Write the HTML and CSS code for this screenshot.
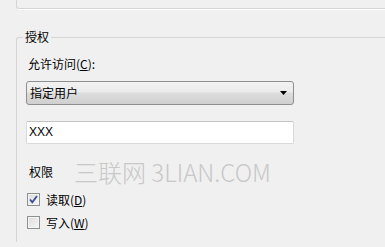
FILE: index.html
```html
<!DOCTYPE html>
<html>
<head>
<meta charset="utf-8">
<link rel="stylesheet" href="styles.css">
</head>
<body>
<div class="prev-group"></div>
<fieldset class="group">
  <legend class="group-title">授权</legend>
  <div class="field-label">允许访问(<u>C</u>):</div>
  <div class="select">
    <span class="select-text">指定用户</span>
    <svg class="select-arrow" width="7" height="4" viewBox="0 0 7 4"><path d="M0 0H7L3.5 4Z" fill="#000"/></svg>
  </div>
  <div class="input">XXX</div>
  <div class="perm-head">
    <span class="section-label">权限</span>
    <span class="watermark">三联网 3LIAN.COM</span>
  </div>
  <div class="check-row first">
    <span class="checkbox">
      <svg width="9" height="9" viewBox="0 0 9 9"><path d="M1 4.5L3.3 7.2L8 1" fill="none" stroke="#3b4f91" stroke-width="1.8"/></svg>
    </span>
    <span class="check-label">读取(<u>D</u>)</span>
  </div>
  <div class="check-row">
    <span class="checkbox"></span>
    <span class="check-label">写入(<u>W</u>)</span>
  </div>
</fieldset>
</body>
</html>
```
FILE: styles.css
```css
html, body {
  margin: 0;
  padding: 0;
  background: #f0f0f0;
  overflow: hidden;
  width: 385px;
  height: 247px;
}
body {
  font-family: "Noto Sans CJK SC", "Noto Sans", sans-serif;
  font-size: 12px;
  color: #000;
}
.prev-group {
  margin-left: 16px;
  height: 8px;
  border-left: 1px solid #d5d5d5;
  border-bottom: 1px solid #d5d5d5;
  border-bottom-left-radius: 3px;
  box-shadow: 1px 1px 0 #fff;
}
.group {
  margin: 20px 0 0 16px;
  padding: 0 0 0 9px;
  height: 213px;
  border: 1px solid #d5d5d5;
  border-right: none;
  border-bottom: none;
  border-top-left-radius: 3px;
  box-sizing: border-box;
  min-width: 0;
}
.group-title {
  margin-left: -3px;
  padding: 0 2px;
  line-height: 16px;
}
.field-label {
  margin-top: 11px;
  padding-left: 2px;
  line-height: 16px;
}
.select {
  margin-top: 9px;
  width: 268px;
  height: 24px;
  box-sizing: border-box;
  border: 1px solid #8e8f8f;
  border-radius: 3px;
  background: linear-gradient(#f2f2f2 0%, #ebebeb 45%, #dddddd 50%, #cfcfcf 100%);
  display: flex;
  align-items: center;
  justify-content: space-between;
  padding: 0 6px 0 3px;
}
.select-text {
  line-height: 16px;
}
.input {
  margin-top: 16px;
  width: 268px;
  height: 23px;
  box-sizing: border-box;
  border: 1px solid #d9d9d9;
  border-top-color: #c5c5c5;
  border-radius: 2px;
  background: #fff;
  padding: 0 2px;
  line-height: 21px;
  font-family: "Liberation Sans", "Noto Sans CJK SC", sans-serif;
}
.perm-head {
  margin-top: 14px;
  height: 28px;
  display: flex;
  align-items: center;
  gap: 21px;
  padding-left: 3px;
}
.section-label {
  line-height: 16px;
}
.watermark {
  font-size: 24px;
  font-weight: 300;
  line-height: 28px;
  color: #c8c8c8;
  white-space: nowrap;
}
.check-row {
  display: flex;
  align-items: center;
  gap: 6px;
  height: 23px;
  padding-left: 1px;
}
.check-row.first {
  margin-top: 2px;
}
.checkbox {
  width: 13px;
  height: 13px;
  box-sizing: border-box;
  border: 1px solid #8e8f8f;
  background: linear-gradient(135deg, #dcdcdc, #f6f6f6);
  box-shadow: inset 0 0 0 1px #f4f4f4;
  display: flex;
  align-items: center;
  justify-content: center;
}
.check-label {
  line-height: 16px;
}
```
